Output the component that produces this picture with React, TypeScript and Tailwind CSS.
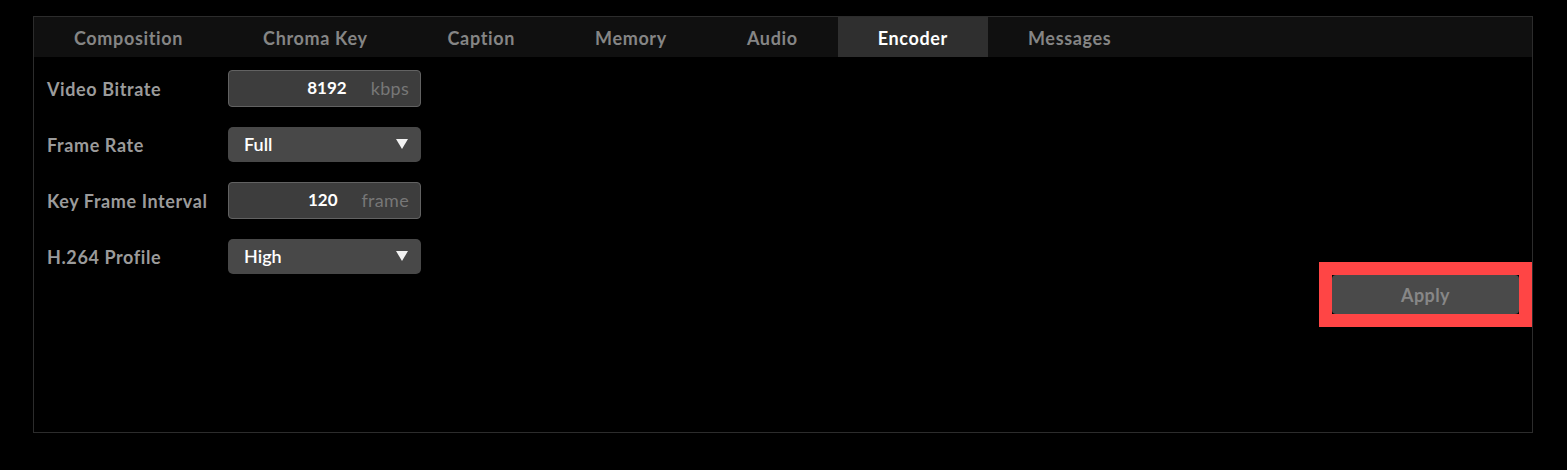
import React from 'react'

const tabs = ["Composition", "Chroma Key", "Caption", "Memory", "Audio", "Encoder", "Messages"]

const NumberField = ({ value, unit }: { value: string; unit: string }) => {
  return (
    <div className='flex items-center justify-end h-[37px] w-[193px] rounded-[4px] border border-[#626262] bg-[#3d3d3d] pr-[11px]'>
      <span className='text-[17px] font-bold text-white'>{value}</span>
      <span className='ml-[24px] text-[18px] tracking-[0.3px] text-[#777777]'>{unit}</span>
    </div>
  )
}

const SelectField = ({ value }: { value: string }) => {
  return (
    <div className='flex items-center justify-between h-[35px] w-[193px] rounded-[5px] bg-[#484848] pl-[16px] pr-[13px]'>
      <span className='text-[18px] font-semibold text-white'>{value}</span>
      <svg width="12" height="10" viewBox="0 0 12 10">
        <polygon points="0,0 12,0 6,10" fill="#f2f2f2" />
      </svg>
    </div>
  )
}

const App = () => {
  const rows = [
    { label: "Video Bitrate", field: <NumberField value="8192" unit="kbps" /> },
    { label: "Frame Rate", field: <SelectField value="Full" /> },
    { label: "Key Frame Interval", field: <NumberField value="120" unit="frame" /> },
    { label: "H.264 Profile", field: <SelectField value="High" /> },
  ]

  return (
    <div className='w-full h-[470px] bg-black pt-[16px] pl-[33px]' style={{ fontFamily: 'Lato, "Open Sans", sans-serif' }}>
      <div className='w-[1500px] h-[417px] border border-[#2c2c2c] flex flex-col'>
        {/* tab bar */}
        <div className='flex h-[40px] bg-[#101010]'>
          {tabs.map((t, idx) => {
            const active = t === "Encoder"
            return (
              <div key={idx} className={`flex items-center px-10 pt-[2px] text-[18px] tracking-[0.65px] font-bold ${active ? 'bg-[#2f2f2f] text-white' : 'text-[#858585]'}`}>
                {t}
              </div>
            )
          })}
        </div>

        <div className='flex flex-1'>
          <div className='flex flex-col pl-[13px] pt-[3px]'>
            {rows.map((r, idx) => {
              return (
                <div key={idx} className='flex items-center h-[56px]'>
                  <div className='w-[181px] pt-[2px] text-[18px] tracking-[0.6px] font-bold text-[#9b9b9b]'>{r.label}</div>
                  {r.field}
                </div>
              )
            })}
          </div>

          <div className='ml-auto mt-[205px]'>
            <div className='border-[13px] border-[#ff4545] w-[213px] h-[65px]'>
              <button className='w-full h-full pt-[2px] rounded-[4px] bg-[#4a4a4a] text-[18px] tracking-[0.4px] font-bold text-[#878787]'>
                Apply
              </button>
            </div>
          </div>
        </div>
      </div>
    </div>
  )
}

export default App
